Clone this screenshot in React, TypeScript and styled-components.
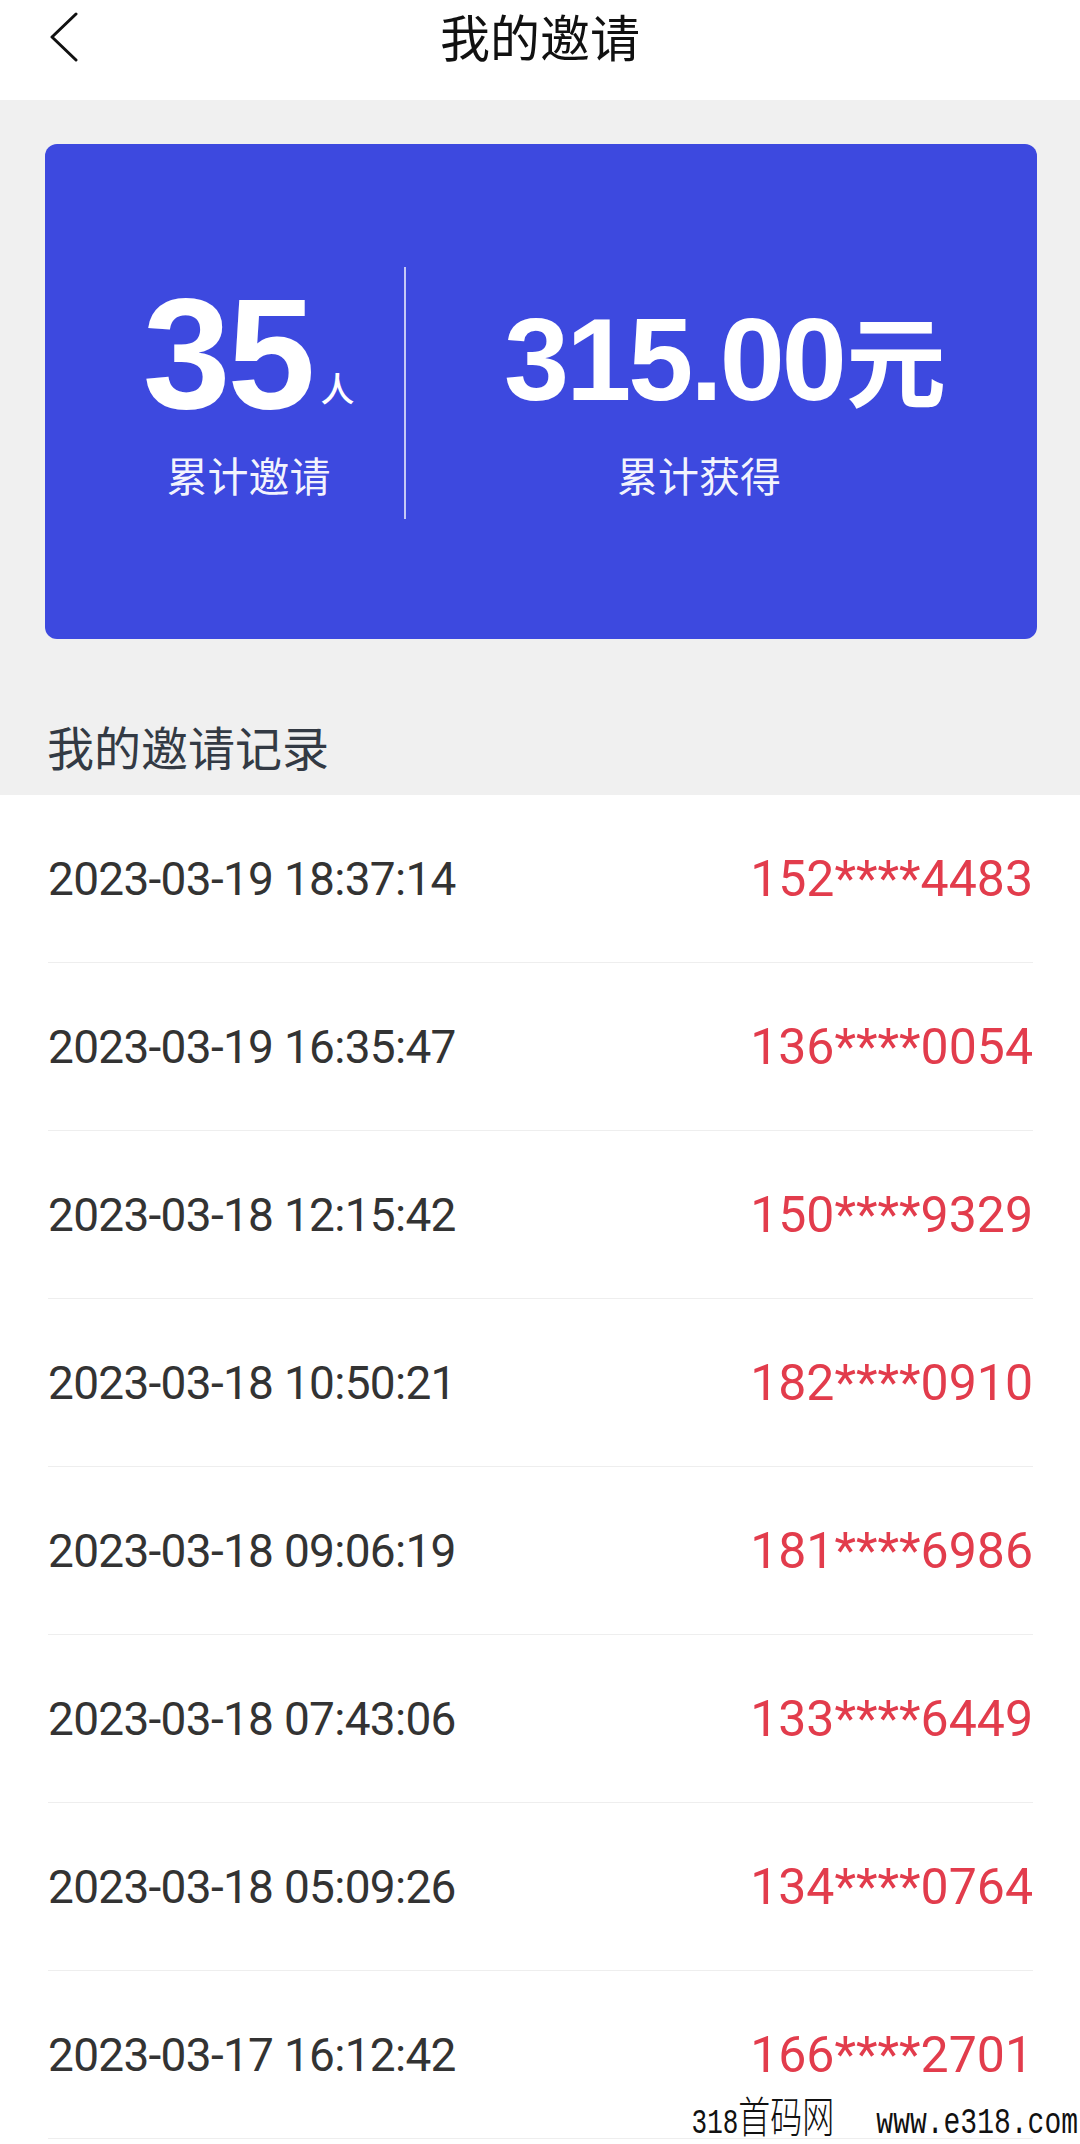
import React from "react";
import styled, { createGlobalStyle } from "styled-components";

const GlobalStyle = createGlobalStyle`
  html, body { margin: 0; padding: 0; background: #ffffff; }
  body { font-family: "Noto Sans CJK SC", "Noto Sans", sans-serif; }
  * { box-sizing: border-box; }
`;

const Page = styled.div`
  position: relative;
  width: 1080px;
  height: 2144px;
  overflow: hidden;
  background: #ffffff;
`;

const Header = styled.header`
  display: grid;
  grid-template-columns: 1fr auto 1fr;
  align-items: start;
  height: 100px;
  padding: 10px 48px 0 48px;
  background: #ffffff;
`;

const BackButton = styled.div`
  margin-top: 2px;
  width: 32px;
  height: 50px;
  display: flex;
  align-items: center;
`;

const Title = styled.h1`
  margin: 0;
  font-family: "Noto Sans CJK SC", sans-serif;
  font-size: 50px;
  line-height: 50px;
  font-weight: 400;
  color: #111111;
`;

const GraySection = styled.section`
  background: #f0f0f0;
  padding: 44px 43px 0 45px;
`;

const Card = styled.div`
  height: 495px;
  background: #3d49df;
  border-radius: 12px;
  display: flex;
  align-items: flex-end;
  padding: 0 45px 144px 48px;
  color: #ffffff;
`;

const StatCol = styled.div<{ $width?: number }>`
  ${(p) => (p.$width ? `width: ${p.$width}px; flex: none;` : `flex: 1;`)}
  display: flex;
  flex-direction: column;
  align-items: center;
`;

const StatValue = styled.div<{ $size: number; $gap: number; $shift?: number }>`
  font-family: "Liberation Sans", Arial, "Noto Sans CJK SC", sans-serif;
  font-weight: 700;
  font-size: ${(p) => p.$size}px;
  line-height: 1;
  letter-spacing: -3px;
  white-space: nowrap;
  margin-bottom: ${(p) => p.$gap}px;
  padding-left: ${(p) => p.$shift ?? 0}px;
`;

const Unit = styled.span<{ $size: number; $lift: number }>`
  font-family: "Noto Sans CJK SC", sans-serif;
  font-size: ${(p) => p.$size}px;
  font-weight: ${(p) => (p.$size > 60 ? 700 : 500)};
  letter-spacing: 0;
  line-height: 1;
  vertical-align: ${(p) => p.$lift}px;
  margin-left: ${(p) => (p.$size > 60 ? 2 : 8)}px;
`;

const StatLabel = styled.div`
  font-family: "Noto Sans CJK SC", sans-serif;
  font-size: 41px;
  line-height: 1;
  color: rgba(255, 255, 255, 0.94);
`;

const Divider = styled.div`
  align-self: flex-end;
  flex: none;
  width: 2px;
  height: 252px;
  margin-bottom: -24px;
  background: rgba(255, 255, 255, 0.7);
`;

const SectionTitle = styled.h2`
  margin: 0;
  padding: 83px 0 26px 2px;
  font-family: "Noto Sans CJK SC", sans-serif;
  font-size: 47px;
  line-height: 47px;
  font-weight: 400;
  color: #333a44;
`;

const List = styled.ul`
  list-style: none;
  margin: 0;
  padding: 0 47px 0 48px;
  background: #ffffff;
`;

const Row = styled.li`
  height: 168px;
  display: flex;
  align-items: center;
  justify-content: space-between;
  border-bottom: 1px solid #eeeeee;
`;

const DateText = styled.span`
  font-family: Roboto, "Liberation Sans", sans-serif;
  font-size: 46px;
  letter-spacing: -0.7px;
  color: #333333;
`;

const Phone = styled.span`
  font-family: Roboto, "Liberation Sans", sans-serif;
  font-size: 50px;
  color: #e23c4c;
`;

const Watermark = styled.div`
  position: absolute;
  right: 2px;
  bottom: 2px;
  display: flex;
  align-items: baseline;
  gap: 42px;
  color: #111111;
  line-height: 1;
  transform: scaleY(1.35);
  transform-origin: bottom right;
  white-space: nowrap;
`;

const WmGroup = styled.span`
  display: inline-flex;
  align-items: baseline;
`;

const WmAscii = styled.span<{ $size: number }>`
  font-family: "Liberation Mono", monospace;
  font-size: ${(p) => p.$size}px;
  line-height: 1;
`;

const WmCjk = styled.span`
  font-family: "Noto Sans CJK SC", sans-serif;
  font-size: 32px;
  line-height: 1;
  font-weight: 300;
`;

const records = [
  ["2023-03-19 18:37:14", "152****4483"],
  ["2023-03-19 16:35:47", "136****0054"],
  ["2023-03-18 12:15:42", "150****9329"],
  ["2023-03-18 10:50:21", "182****0910"],
  ["2023-03-18 09:06:19", "181****6986"],
  ["2023-03-18 07:43:06", "133****6449"],
  ["2023-03-18 05:09:26", "134****0764"],
  ["2023-03-17 16:12:42", "166****2701"],
];

export default function App() {
  return (
    <>
      <GlobalStyle />
      <Page>
        <Header>
          <BackButton>
            <svg width="32" height="50" viewBox="0 0 32 50" fill="none">
              <polyline
                points="28,2 4,25 28,48"
                stroke="#111"
                strokeWidth="3"
                strokeLinecap="round"
                strokeLinejoin="round"
              />
            </svg>
          </BackButton>
          <Title>我的邀请</Title>
          <div />
        </Header>
        <GraySection>
          <Card>
            <StatCol $width={311}>
              <StatValue $size={158} $gap={22}>
                35
                <Unit $size={34} $lift={6}>人</Unit>
              </StatValue>
              <StatLabel>累计邀请</StatLabel>
            </StatCol>
            <Divider />
            <StatCol>
              <StatValue $size={117} $gap={36} $shift={52}>
                315.00
                <Unit $size={100} $lift={0}>元</Unit>
              </StatValue>
              <StatLabel>累计获得</StatLabel>
            </StatCol>
          </Card>
          <SectionTitle>我的邀请记录</SectionTitle>
        </GraySection>
        <List>
          {records.map(([d, p]) => (
            <Row key={d}>
              <DateText>{d}</DateText>
              <Phone>{p}</Phone>
            </Row>
          ))}
        </List>
        <Watermark>
          <WmGroup>
            <WmAscii $size={26}>318</WmAscii>
            <WmCjk>首码网</WmCjk>
          </WmGroup>
          <WmAscii $size={28}>www.e318.com</WmAscii>
        </Watermark>
      </Page>
    </>
  );
}
